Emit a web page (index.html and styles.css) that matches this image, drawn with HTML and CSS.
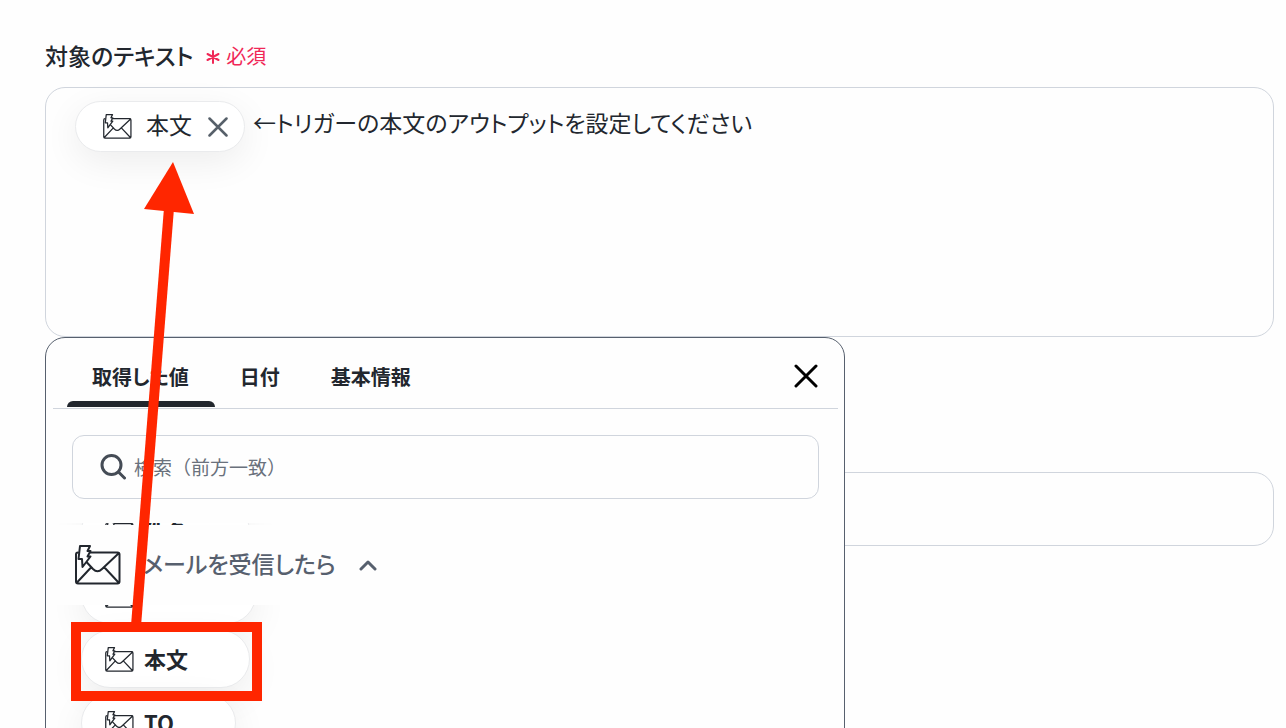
FILE: index.html
```html
<!DOCTYPE html>
<html lang="ja">
<head>
<meta charset="utf-8">
<title>対象のテキスト</title>
<link rel="stylesheet" href="styles.css">
</head>
<body>
<svg class="defs" aria-hidden="true">
  <symbol id="mail" viewBox="0 0 46 40">
    <path d="M3 7.500Q1 7.500 1 9.500V36.500Q1 38.500 3 38.500H42.500Q44.500 38.500 44.500 36.500V9.500Q44.500 7.500 42.500 7.500H13M1.500 38L16 22.500M44 38L29.500 22.500M11.500 17L18 24Q22.500 28.500 27 24L44 8"/>
    <path class="bolt" d="M5 1H15L12.500 6H15.500L12.500 11.500H15.500L7.500 22L7 14H3.500Z"/>
  </symbol>
</svg>
<main class="page">
  <section class="field">
    <div class="label-row">
      <span class="label" id="target-label">対象のテキスト</span>
      <span class="required">
        <svg class="asterisk" viewBox="0 0 14 14"><path d="M7 1V13M1.500 4L12.500 10M12.500 4L1.500 10"/></svg>必須
      </span>
    </div>
    <div class="editor-wrap">
      <div class="editor" role="textbox" aria-multiline="true" aria-labelledby="target-label" tabindex="0">
        <span class="token">
          <svg class="mail-icon"><use href="#mail"/></svg>
          <span class="token-text">本文</span>
          <button class="token-remove" type="button" aria-label="削除"><svg viewBox="0 0 20 20"><path d="M1.500 1.500L18.500 18.500M18.500 1.500L1.500 18.500"/></svg></button>
        </span>
        <span class="hint">←トリガーの本文のアウトプットを設定してください</span>
      </div>
      <div class="panel" role="dialog" aria-label="取得した値">
        <div class="panel-head">
          <div class="tabs" role="tablist">
            <button class="tab active" type="button" role="tab" aria-selected="true">取得した値</button>
            <button class="tab" type="button" role="tab">日付</button>
            <button class="tab" type="button" role="tab">基本情報</button>
          </div>
          <button class="close" type="button" aria-label="閉じる"><svg viewBox="0 0 24 24"><path d="M2 2L22 22M22 2L2 22"/></svg></button>
        </div>
        <label class="search">
          <svg viewBox="0 0 26 26"><circle cx="11.500" cy="11" r="9.500"/><path d="M18.500 18L24.500 24"/></svg>
          <input type="text" placeholder="検索（前方一致）" aria-label="検索">
        </label>
        <div class="results">
          <button class="group" type="button" aria-expanded="true">
            <svg class="group-icon"><use href="#mail"/></svg>
            <span class="group-name">メールを受信したら</span>
            <svg class="chevron" viewBox="0 0 18 12"><path d="M2 10L9 3L16 10"/></svg>
          </button>
          <ul class="list">
            <li><button class="item" type="button"><svg class="mail-icon"><use href="#mail"/></svg><span>件名</span></button></li>
            <li><button class="item" type="button"><svg class="mail-icon"><use href="#mail"/></svg><span>Date</span></button></li>
            <li><button class="item" type="button"><svg class="mail-icon"><use href="#mail"/></svg><span>本文</span></button></li>
            <li><button class="item" type="button"><svg class="mail-icon"><use href="#mail"/></svg><span>TO</span></button></li>
          </ul>
        </div>
      </div>
    </div>
  </section>
  <input class="next-field" type="text" aria-label="テキスト">
  <svg class="annotation" viewBox="0 0 280 728" aria-hidden="true">
    <path class="shaft" d="M136 626L169 208"/>
    <path class="tip" d="M173 162L194 214L144 209Z"/>
    <rect x="76" y="627" width="181" height="69"/>
  </svg>
</main>
</body>
</html>
```
FILE: styles.css
```css
* { box-sizing: border-box; }
body {
  margin: 0;
  background: #fefefe;
  color: #22272e;
  font-family: "Noto Sans CJK JP", sans-serif;
  font-size: 23px;
  line-height: 32px;
}
button {
  padding: 0;
  border: 0;
  background: none;
  color: inherit;
  font: inherit;
}
svg { flex: none; fill: none; stroke: currentColor; stroke-linecap: round; stroke-linejoin: round; }
.defs { position: absolute; width: 0; height: 0; }
.bolt { fill: #fff; }
.page {
  position: relative;
  height: 100vh;
  overflow: hidden;
  padding: 40px 12px 0 45px;
}
.label-row { display: flex; align-items: center; gap: 13px; height: 32px; margin-bottom: 15px; }
.label { padding-bottom: 2px; font-weight: 500; font-feature-settings: "palt"; }
.required { display: flex; align-items: center; gap: 6px; color: #f02857; font-size: 20px; }
.asterisk { width: 14px; height: 14px; stroke-width: 2; margin-top: 2px; }
.editor-wrap { position: relative; }
.editor {
  display: flex;
  align-items: flex-start;
  gap: 8px;
  height: 250px;
  padding: 13px 29px;
  border: 1px solid #d0d5dd;
  border-radius: 20px;
}
.token {
  display: flex;
  align-items: center;
  height: 51px;
  padding: 0 16px 0 27px;
  gap: 14px;
  border: 1px solid #eaebed;
  border-radius: 26px;
  background: #fff;
  box-shadow: 0 10px 36px rgba(0, 0, 0, 0.07);
}
.token-text { padding-bottom: 6px; font-feature-settings: "palt"; }
.mail-icon { width: 29px; height: 25px; stroke-width: 2; }
.token-remove { display: flex; margin-left: 2px; color: #57606a; }
.token-remove svg { width: 20px; height: 20px; stroke-width: 2.500; }
.hint { padding-top: 5px; font-feature-settings: "palt"; }
.panel {
  position: absolute;
  top: 100%;
  left: 0;
  width: 800px;
  max-width: 100%;
  border: 1px solid #57606e;
  border-radius: 20px;
  background: #fefefe;
}
.panel-head {
  display: flex;
  align-items: center;
  justify-content: space-between;
  height: 71px;
  padding: 0 20px 0 14px;
  margin: 0 6px 0 7px;
  border-bottom: 1px solid #d0d5dd;
}
.tabs { display: flex; height: 100%; }
.tab {
  height: 69px;
  padding: 15px 26px 0 25px;
  border-bottom: 6px solid transparent;
  font-size: 20px;
  font-weight: 700;
  font-feature-settings: "palt";
}
.tab.active { position: relative; }
.tab.active::after {
  content: "";
  position: absolute;
  right: 0;
  bottom: -6px;
  left: 0;
  height: 6px;
  border-radius: 6px 6px 0 0;
  background: #22272e;
}
.close { display: flex; padding-top: 6px; color: #000; }
.close svg { width: 24px; height: 24px; stroke-width: 3; }
.search {
  display: flex;
  align-items: center;
  gap: 8px;
  height: 64px;
  margin: 26px 25px 24px 26px;
  padding: 0 27px;
  border: 1px solid #d0d5dd;
  border-radius: 12px;
  color: #454c56;
}
.search svg { width: 26px; height: 26px; stroke-width: 3; }
.search input {
  flex: 1;
  min-width: 0;
  padding: 0;
  border: 0;
  outline: 0;
  background: none;
  font: inherit;
  font-size: 19px;
}
.search input::placeholder { color: #6a717c; opacity: 1; }
.results { height: 300px; overflow: hidden; padding-top: 2px; }
.group {
  position: relative;
  z-index: 1;
  display: flex;
  align-items: center;
  width: 100%;
  height: 80px;
  padding-left: 29px;
  background: #fefefe;
  color: #57606e;
  font-weight: 500;
}
.group-icon { width: 46px; height: 40px; margin-right: 22px; color: #22272e; stroke-width: 2; }
.group-name { padding-bottom: 4px; font-feature-settings: "palt"; }
.chevron { width: 18px; height: 12px; margin-left: 23px; stroke-width: 3; }
.list { margin: -103px 0 0; padding: 0 0 0 35px; list-style: none; }
.list li { height: 64px; }
.item {
  display: flex;
  align-items: center;
  gap: 10px;
  height: 58px;
  padding: 0 61px 0 23px;
  border: 1px solid #eaebed;
  border-radius: 29px;
  background: #fff;
  box-shadow: 0 10px 36px rgba(0, 0, 0, 0.07);
  font-size: 22px;
  font-weight: 700;
}
.item span { padding-bottom: 2px; }
.next-field {
  display: block;
  width: 100%;
  height: 74px;
  margin-top: 135px;
  border: 1px solid #d0d5dd;
  border-radius: 20px;
  background: #fefefe;
}
.annotation {
  position: absolute;
  top: 0;
  left: 0;
  z-index: 2;
  width: 280px;
  height: 728px;
  color: #ff2600;
  stroke-width: 10;
  stroke-linecap: butt;
  stroke-linejoin: miter;
  pointer-events: none;
}
.annotation .tip { fill: currentColor; stroke: none; }
```
